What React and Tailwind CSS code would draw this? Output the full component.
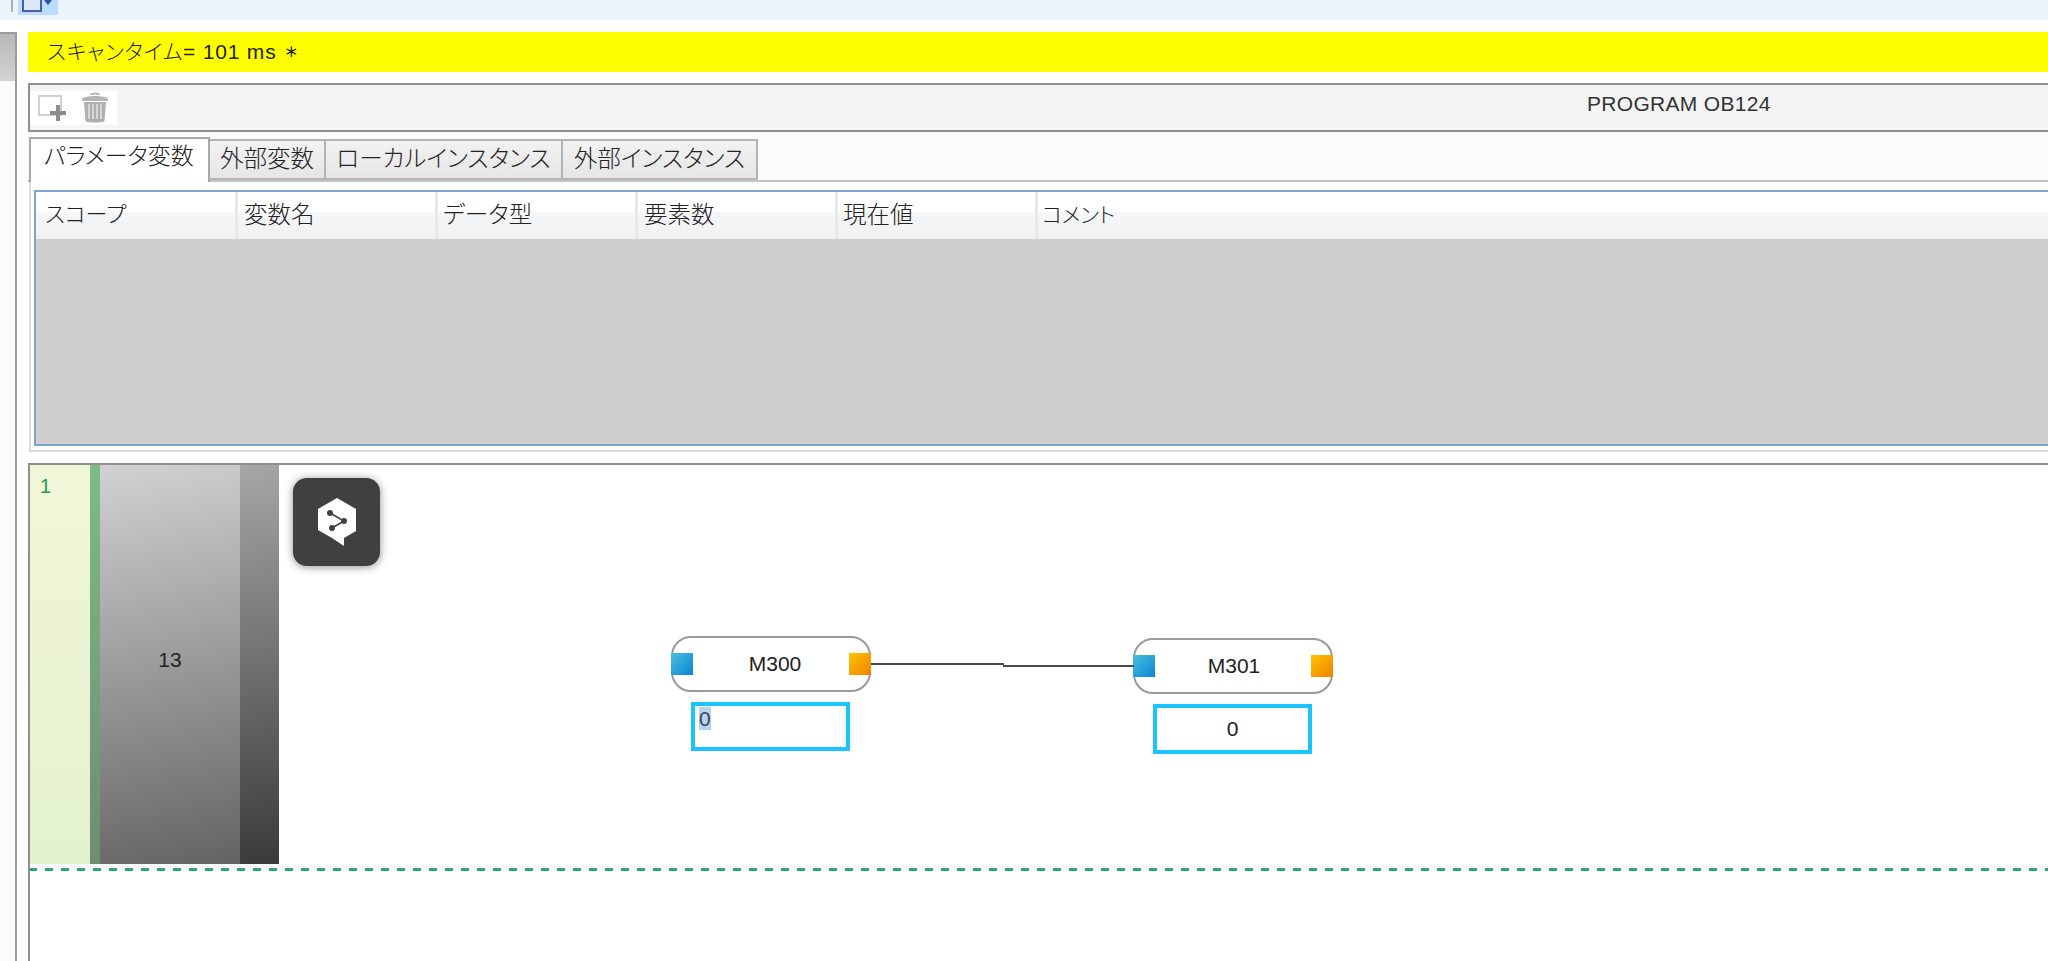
const font = "font-['Liberation_Sans','Noto_Sans_CJK_JP',sans-serif] [font-feature-settings:'palt']";

const tabs = [
  { label: '外部変数', width: 'w-[116px]' },
  { label: 'ローカルインスタンス', width: 'w-[237px]' },
  { label: '外部インスタンス', width: 'w-[195px]' },
];

const columns = [
  { label: 'スコープ', width: 'w-[202px]', style: 'pl-[9px] text-[22px]' },
  { label: '変数名', width: 'w-[200px]', style: 'pl-[6px] text-[23.500px]' },
  { label: 'データ型', width: 'w-[200px]', style: 'pl-[5px] text-[23.500px]' },
  { label: '要素数', width: 'w-[200px]', style: 'pl-[6px] text-[23.500px]' },
  { label: '現在値', width: 'w-[200px]', style: 'pl-[5px] text-[23.500px]' },
];

function AddIcon() {
  return (
    <svg width="30" height="30" viewBox="0 0 30 30">
      <path d="M2 3h22v19H2z" fill="#fff" stroke="#d0d0d0" strokeWidth="2" />
      <path d="M21 12v16M13 20h16" stroke="#8c8c8c" strokeWidth="4" />
    </svg>
  );
}

function TrashIcon() {
  return (
    <svg width="28" height="32" viewBox="0 0 28 32">
      <path d="M10 3c0-2 8-2 8 0" fill="none" stroke="#b5b5b5" strokeWidth="2" />
      <path d="M1 7c2-4 24-4 26 0v2H1z" fill="#b5b5b5" />
      <path d="M3 10h22l-1.500 19c-.5 2-18.500 2-19 0z" fill="#b0b0b0" />
      <path d="M8 12v15M12 12v15M16 12v15M20 12v15" stroke="#e4e4e4" strokeWidth="1.500" />
    </svg>
  );
}

function DeeplIcon() {
  return (
    <div className="absolute left-[263px] top-[13px] w-[87px] h-[88px] rounded-[14px] bg-[#404040] shadow-[0_1px_8px_rgba(0,0,0,0.45)]">
      <svg width="87" height="88" viewBox="0 0 87 88">
        <path d="M44 20 63 31V53L51 60V68L39 60 25 52V31Z" fill="#fff" />
        <path d="M37 35 51 43 39 50" fill="none" stroke="#404040" strokeWidth="1.500" />
        <circle cx="37" cy="35" r="3" fill="#404040" />
        <circle cx="51" cy="43" r="3" fill="#404040" />
        <circle cx="39" cy="50" r="3" fill="#404040" />
      </svg>
    </div>
  );
}

function Block({ label, className, labelPad }) {
  return (
    <div className={`absolute w-[200px] h-[56px] rounded-[20px] border-2 border-[#9a9a9a] bg-white flex items-center justify-between ${className}`}>
      <span className="w-[22px] h-[22px] -ml-[2px] bg-gradient-to-br from-[#45c0d8] to-[#0a84d8]" />
      <span className={`text-[21px] font-light text-[#222] ${labelPad}`}>{label}</span>
      <span className="w-[22px] h-[22px] -mr-[2px] bg-gradient-to-br from-[#ffc400] to-[#f08000]" />
    </div>
  );
}

export default function App() {
  return (
    <div className={`w-[2048px] h-[961px] overflow-hidden bg-white flex flex-col ${font} text-[#222]`}>
      {/* top toolbar */}
      <div className="h-[20px] shrink-0 bg-[#ebf3fc] flex items-start">
        <div className="w-[2px] h-[12px] ml-[11px] bg-[#b0b0b0]" />
        <div className="ml-[5px] w-[40px] h-[15px] bg-[#bcdcff] overflow-hidden">
          <svg width="40" height="15" viewBox="0 0 40 15">
            <path d="M5 -4h18v15H5z" fill="#dce8f8" stroke="#4a5fa8" strokeWidth="2" />
            <path d="M26 0h8l-4 5z" fill="#3050a0" />
          </svg>
        </div>
      </div>

      <div className="flex flex-1 min-h-0">
        {/* left scrollbar */}
        <div className="w-[17px] shrink-0 mt-[12px] bg-[#fcfcfc] border-t-2 border-r-2 border-[#9c9c9c]">
          <div className="h-[47px] bg-gradient-to-b from-[#b8b8b8] to-[#d2d2d2]" />
        </div>

        <div className="flex-1 min-w-0 ml-[11px] flex flex-col">
          {/* scan time */}
          <div className="mt-[12px] h-[40px] shrink-0 bg-[#ffff00] pl-[19px] flex items-center gap-[9px] text-[21px] tracking-[0.8px] font-light">
            <span>スキャンタイム= 101 ms</span>
            <span className="text-[14px] font-bold">＊</span>
          </div>

          {/* program toolbar */}
          <div className="mt-[11px] h-[49px] shrink-0 border-y-2 border-l-2 border-[#8f8f8f] bg-[#f4f4f4] relative flex items-center">
            <div className="w-[87px] h-[34px] bg-white flex items-center gap-[14px] pl-[7px]">
              <AddIcon />
              <TrashIcon />
            </div>
            <span className="absolute left-[1557px] top-[3px] text-[21px] tracking-[0.3px] text-[#333] font-light">PROGRAM OB124</span>
          </div>

          {/* tabs */}
          <div className="h-[50px] shrink-0 bg-[#fbfbfb] border-b-2 border-[#c4c4c4] flex items-end pl-[1px]">
            <div className="w-[181px] h-[45px] -mb-[2px] border-t-2 border-x-2 border-[#a8a8a8] bg-white pl-[13px] pt-[2px] text-[23px] leading-[30px] font-light">
              パラメータ変数
            </div>
            {tabs.map((tab) => (
              <div
                key={tab.label}
                className={`${tab.width} h-[41px] border-y-2 border-r-2 border-[#b4b4b4] bg-gradient-to-b from-[#f2f2f2] to-[#e6e6e6] flex items-center justify-center text-[23.500px] font-light`}
              >
                {tab.label}
              </div>
            ))}
          </div>

          {/* parameter table */}
          <div className="h-[270px] shrink-0 ml-[1px] border-l-2 border-b-2 border-[#dcdcdc] pl-[3px] pt-[8px] pb-[4px]">
            <div className="h-full border-t-2 border-l-2 border-b-2 border-[#7fa3c8] bg-[#cfcfcf] flex flex-col">
              <div className="h-[47px] shrink-0 flex bg-[linear-gradient(#fff_0,#fff_42%,#f5f6f8_44%,#f0f1f3_100%)]">
                {columns.map((col) => (
                  <div
                    key={col.label}
                    className={`${col.width} ${col.style} shrink-0 border-r-[3px] border-[#e8e8ea] pt-[6px] leading-[34px] font-light`}
                  >
                    {col.label}
                  </div>
                ))}
                <div className="flex-1 pl-[4px] pt-[6px] text-[21px] leading-[34px] font-light">コメント</div>
              </div>
            </div>
          </div>

          {/* ladder canvas */}
          <div className="mt-[11px] flex-1 min-h-0 border-t-2 border-l-2 border-[#8f8f8f] bg-white relative">
            <div className="h-[399px] flex">
              <div className="w-[60px] shrink-0 bg-gradient-to-b from-[#f2f6d8] to-[#e3f1cf] pl-[10px] pt-[6px] text-[20px] leading-[30px] font-light text-[#2a9a5a]">1</div>
              <div className="w-[10px] shrink-0 bg-gradient-to-b from-[#7cbc86] to-[#6e8c72]" />
              <div className="w-[140px] shrink-0 bg-[linear-gradient(168deg,#d2d2d4,#636363)] flex items-center justify-center pb-[9px] text-[21px] font-light">13</div>
              <div className="w-[39px] shrink-0 bg-[linear-gradient(172deg,#a6a6a6,#3a3a3a)]" />
            </div>
            <div className="mt-[4px] h-[3px] bg-[repeating-linear-gradient(90deg,#2aa772_0,#2aa772_7px,transparent_7px,transparent_15px,#2aa772_15px,#2aa772_16px)]" />

            <DeeplIcon />

            <Block label="M300" className="left-[641px] top-[171px]" labelPad="pl-[8px]" />
            <Block label="M301" className="left-[1103px] top-[173px]" labelPad="pl-[2px]" />

            {/* wire */}
            <div className="absolute left-[841px] top-[198px] w-[133px] h-[2px] bg-[#4a4a4a]" />
            <div className="absolute left-[973px] top-[200px] w-[131px] h-[2px] bg-[#4a4a4a]" />

            <div className="absolute left-[661px] top-[237px] w-[159px] h-[49px] border-4 border-[#1bc4ff] bg-white text-[21px] leading-[24px] pl-[4px] pt-[1px] font-light">
              <span className="bg-[#b4d4f4] text-[#445]">0</span>
            </div>
            <div className="absolute left-[1123px] top-[239px] w-[159px] h-[50px] border-4 border-[#1bc4ff] bg-white flex items-center justify-center text-[21px] font-light">0</div>
          </div>
        </div>
      </div>
    </div>
  );
}
